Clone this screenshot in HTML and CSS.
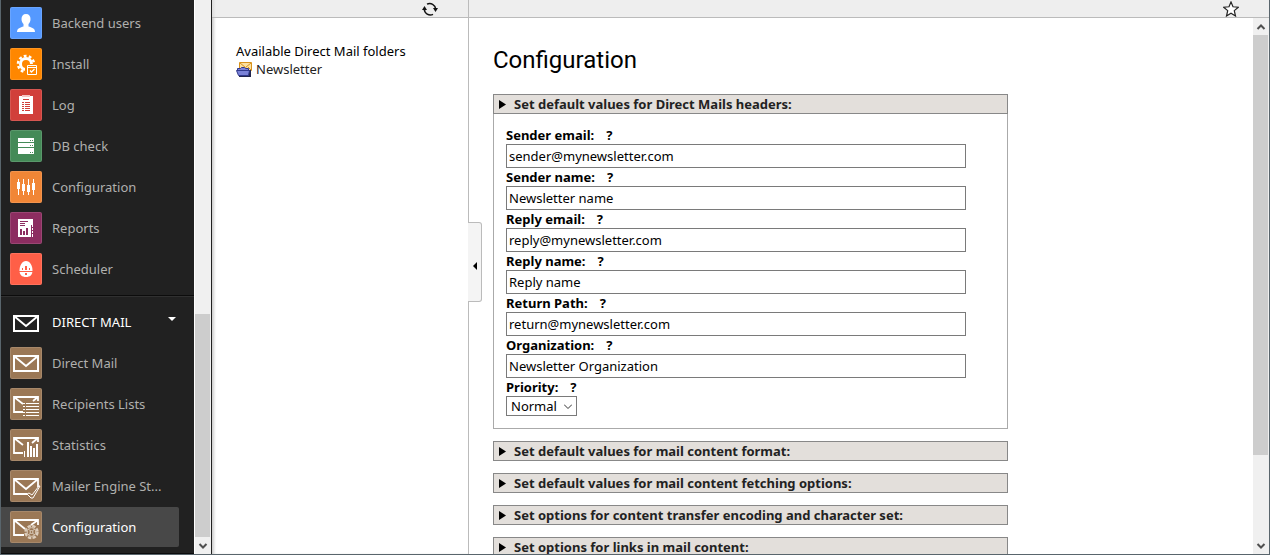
FILE: index.html
```html
<!DOCTYPE html>
<html lang="en">

<head>
    <meta charset="UTF-8">
    <meta name="viewport" content="width=device-width, initial-scale=1.0">
    <title>Direct Mail - Configuration</title>
    <link rel="stylesheet" href="styles.css">
</head>

<body>

    <div class="app">

        <!-- Module menu -->
        <nav class="menu">
            <ul class="menu-group">
                <li><a href="#" class="menu-item">
                    <svg class="icon blue" viewBox="0 0 32 32"><path fill="#fff" d="M16 7c3 0 4.500 2 4.500 5 0 2.500-1 4-2 5v2.500c3 1 6.500 1.500 6.500 5.500H7c0-4 3.500-4.500 6.500-5.500V17c-1-1-2-2.500-2-5 0-3 1.500-5 4.500-5z"/></svg>
                    <span>Backend users</span></a></li>
                <li><a href="#" class="menu-item">
                    <svg class="icon orange" viewBox="0 0 32 32"><circle cx="16" cy="16" r="5.500" fill="none" stroke="#fff" stroke-width="3"/><circle cx="16" cy="16" r="8" fill="none" stroke="#fff" stroke-width="2.500" stroke-dasharray="2.800 2.230"/><path fill="#ff8700" d="M15 16h13v12H15z"/><path fill="none" stroke="#fff" d="M17.500 17.500h9v9h-9zM17 19.500h10"/><path fill="none" stroke="#fff" stroke-width="1.300" d="M20 22.500l1.500 1.500 3-3"/></svg>
                    <span>Install</span></a></li>
                <li><a href="#" class="menu-item">
                    <svg class="icon red" viewBox="0 0 32 32"><path fill="#fff" d="M9 7h14v18H9z"/><path fill="#f5c6c4" d="M12 6h8v2h-8z"/><path stroke="#d13f3a" d="M13 10.500h6M12 13.500h2m1 0h5M12 15.500h2m1 0h5M12 17.500h2m1 0h5M12 19.500h2m1 0h5M12 21.500h2m1 0h5"/></svg>
                    <span>Log</span></a></li>
                <li><a href="#" class="menu-item">
                    <svg class="icon green" viewBox="0 0 32 32"><path fill="#fff" d="M8 8h16v4H8zM8 13h16v4H8zM8 18h16v6H8z"/><path stroke="#448a57" d="M20 10.500h1m1 0h1M20 15.500h1m1 0h1M20 22.500h1m1 0h1"/></svg>
                    <span>DB check</span></a></li>
                <li><a href="#" class="menu-item">
                    <svg class="icon amber" viewBox="0 0 32 32"><path stroke="#fff" d="M8.500 8v16M13.500 8v16M18.500 8v16M23.500 8v16"/><path fill="#fff" d="M7 11h3v7H7zM12 13h3v7h-3zM17 14h3v7h-3zM22 12h3v7h-3z"/></svg>
                    <span>Configuration</span></a></li>
                <li><a href="#" class="menu-item">
                    <svg class="icon purple" viewBox="0 0 32 32"><path fill="#fff" d="M8 7h15v18H8z"/><path stroke="#8c2d60" d="M10 9.500h8M10 11.500h5M10 13.500h5M21.500 13v12M22 15.500h1M22 18.500h1M22 21.500h1"/><path fill="#8c2d60" d="M10 17h2v6h-2zM13 19h2v4h-2zM16 16h2v7h-2z"/></svg>
                    <span>Reports</span></a></li>
                <li><a href="#" class="menu-item">
                    <svg class="icon coral" viewBox="0 0 32 32"><path fill="#fff" d="M16 8c4 0 6.500 5 6.500 9.500S20 24 16 24s-6.500-2-6.500-6.500S12 8 16 8z"/><path stroke="#ff5f47" d="M9 18.500h14M12.500 15v2M19.500 15v2"/><path stroke="#ff5f47" stroke-width="2" d="M16 13v4M16 20v2"/></svg>
                    <span>Scheduler</span></a></li>
            </ul>

            <ul class="menu-group">
                <li><a href="#" class="menu-item menu-head">
                    <svg class="icon" viewBox="0 0 32 32"><path fill="none" stroke="#fff" stroke-width="2" d="M4 10h24v15H4zM4 10l12 10 12-10"/></svg>
                    <span>DIRECT MAIL</span>
                    <svg class="caret" viewBox="0 0 8 4"><path fill="#fff" d="M0 0h8L4 4z"/></svg></a></li>
                <li><a href="#" class="menu-item">
                    <svg class="icon brown" viewBox="0 0 32 32"><path fill="none" stroke="#fff" stroke-width="2" d="M4 9h24v15H4zM4 9l12 10L28 9"/></svg>
                    <span>Direct Mail</span></a></li>
                <li><a href="#" class="menu-item">
                    <svg class="icon brown" viewBox="0 0 32 32"><path fill="none" stroke="#fff" stroke-width="1.800" d="M28 13V9H4v15h9M4 9l9 7M28 9l-5 4"/><path stroke="#fff" stroke-width="1.200" d="M13 15.500h2m1 0h13M13 18.500h2m1 0h13M13 21.500h2m1 0h13M13 24.500h2m1 0h13M13 27.500h2m1 0h13"/></svg>
                    <span>Recipients Lists</span></a></li>
                <li><a href="#" class="menu-item">
                    <svg class="icon brown" viewBox="0 0 32 32"><path fill="none" stroke="#fff" stroke-width="1.800" d="M28 13V9H4v15h9M4 9l9 7M28 9l-6 5"/><path fill="#fff" d="M14 22h1v6h-1zM17 13h2v15h-2zM20 17h2v11h-2zM23 19h2v9h-2zM26 15h2v13h-2z"/></svg>
                    <span>Statistics</span></a></li>
                <li><a href="#" class="menu-item">
                    <svg class="icon brown" viewBox="0 0 32 32"><path fill="none" stroke="#fff" stroke-width="1.800" d="M28 17V9H4v15h13M4 9l12 10L28 9"/><path fill="#9b7856" stroke="#fff" d="M17 24l2-1 3 2 7-9h1l-7 12h-2z"/></svg>
                    <span>Mailer Engine St...</span></a></li>
                <li><a href="#" class="menu-item active">
                    <svg class="icon brown" viewBox="0 0 32 32"><path fill="none" stroke="#fff" stroke-width="1.800" d="M28 14V9H4v15h10M4 9l11 9M28 9l-7 5"/><circle cx="21.500" cy="21" r="6" fill="#9b7856" stroke="#dccdbc" stroke-width="2.400" stroke-dasharray="3.400 1.310"/><circle cx="21.500" cy="21" r="4.300" fill="none" stroke="#dccdbc"/><circle cx="21.500" cy="21" r="1.500" fill="none" stroke="#dccdbc"/><path stroke="#dccdbc" d="M18.500 18l2 2M24.500 18l-2 2M18.500 24l2-2M24.500 24l-2-2"/></svg>
                    <span>Configuration</span></a></li>
            </ul>
            <div class="menu-group"></div>
        </nav>

        <div class="scrollbar menu-scroll">
            <div class="thumb"></div>
            <svg class="scroll-arrow" viewBox="0 0 16 16"><path fill="none" stroke="#505050" stroke-width="2" d="M4.500 6.500L8 10l3.500-3.500"/></svg>
        </div>

        <!-- Folder list -->
        <aside class="folders">
            <div class="topbar">
                <button type="button" class="icon-button" aria-label="Refresh">
                    <svg viewBox="0 0 16 16"><path fill="none" stroke="#111" stroke-width="1.500" d="M5 3.200A6 6 0 0 1 13.700 8M11 13.300A6 6 0 0 1 2.300 8"/><path fill="#111" d="M11 7h5l-2.500 4zM0 9h5L2.500 5z"/></svg>
                </button>
            </div>
            <div class="folders-body">
                <div>Available Direct Mail folders</div>
                <a href="#" class="folder">
                    <svg viewBox="0 0 16 16"><path fill="#fbe0a0" stroke="#d8921c" d="M3.500 1.500h12v8h-12z"/><path fill="none" stroke="#d8921c" d="M4 2l5.500 4.500L15 2M4 9l3-3M15 9l-3-3"/><path fill="#22264e" d="M12 9h3v7H3v-1h9z"/><path fill="#7a82d8" stroke="#30388c" d="M1.500 9.500v-2h3l1-1h3l1 1h3v2"/><path fill="#7a82d8" stroke="#30388c" d="M.5 9.500h13l-1 5h-10z"/></svg>
                    <span>Newsletter</span></a>
            </div>
        </aside>

        <!-- Module content -->
        <main class="content">
            <div class="topbar">
                <button type="button" class="icon-button" aria-label="Bookmark">
                    <svg viewBox="0 0 16 16"><path fill="#fff" stroke="#222" stroke-width="1.200" d="M8 1l2 4.800 5.300.4-4 3.400 1.200 5.400L8 12.300 3.500 15l1.200-5.400-4-3.400L6 5.800z"/></svg>
                </button>
            </div>
            <button type="button" class="collapse" aria-label="Collapse folder list">
                <svg viewBox="0 0 4 8"><path d="M4 0v8L0 4z"/></svg>
            </button>
            <div class="content-row">
                <div class="module">
                    <h1>Configuration</h1>

                    <section class="panel">
                        <button type="button" class="panel-title"><svg viewBox="0 0 7 9"><path d="M0 0l7 4.500L0 9z"/></svg>Set default values for Direct Mails headers:</button>
                        <form class="panel-body">
                            <div class="label-row"><label for="senderEmail">Sender email:</label><a href="#" class="help">?</a></div>
                            <input type="text" id="senderEmail" value="sender@mynewsletter.com">

                            <div class="label-row"><label for="senderName">Sender name:</label><a href="#" class="help">?</a></div>
                            <input type="text" id="senderName" value="Newsletter name">

                            <div class="label-row"><label for="replyEmail">Reply email:</label><a href="#" class="help">?</a></div>
                            <input type="text" id="replyEmail" value="reply@mynewsletter.com">

                            <div class="label-row"><label for="replyName">Reply name:</label><a href="#" class="help">?</a></div>
                            <input type="text" id="replyName" value="Reply name">

                            <div class="label-row"><label for="returnPath">Return Path:</label><a href="#" class="help">?</a></div>
                            <input type="text" id="returnPath" value="return@mynewsletter.com">

                            <div class="label-row"><label for="organization">Organization:</label><a href="#" class="help">?</a></div>
                            <input type="text" id="organization" value="Newsletter Organization">

                            <div class="label-row"><label for="priority">Priority:</label><a href="#" class="help">?</a></div>
                            <div class="select-wrap">
                                <select id="priority">
                                    <option>Low</option>
                                    <option selected>Normal</option>
                                    <option>High</option>
                                </select>
                                <svg viewBox="0 0 8 5"><path fill="none" stroke="#333" d="M0 .5l4 4 4-4"/></svg>
                            </div>
                        </form>
                    </section>

                    <section class="panel">
                        <button type="button" class="panel-title"><svg viewBox="0 0 7 9"><path d="M0 0l7 4.500L0 9z"/></svg>Set default values for mail content format:</button>
                    </section>
                    <section class="panel">
                        <button type="button" class="panel-title"><svg viewBox="0 0 7 9"><path d="M0 0l7 4.500L0 9z"/></svg>Set default values for mail content fetching options:</button>
                    </section>
                    <section class="panel">
                        <button type="button" class="panel-title"><svg viewBox="0 0 7 9"><path d="M0 0l7 4.500L0 9z"/></svg>Set options for content transfer encoding and character set:</button>
                    </section>
                    <section class="panel">
                        <button type="button" class="panel-title"><svg viewBox="0 0 7 9"><path d="M0 0l7 4.500L0 9z"/></svg>Set options for links in mail content:</button>
                    </section>
                </div>
                <div class="scrollbar content-scroll">
                    <svg class="scroll-arrow" viewBox="0 0 16 16"><path fill="none" stroke="#505050" stroke-width="2" d="M4.500 10.500L8 7l3.500 3.500"/></svg>
                    <div class="thumb"></div>
                    <svg class="scroll-arrow" viewBox="0 0 16 16"><path fill="none" stroke="#505050" stroke-width="2" d="M4.500 6.500L8 10l3.500-3.500"/></svg>
                </div>
            </div>
        </main>

    </div>
</body>

</html>
```
FILE: styles.css
```css
* {
    box-sizing: border-box;
}

body {
    margin: 0;
    font-family: "Noto Sans", "Open Sans", sans-serif;
    font-size: 13px;
    line-height: 18px;
    color: #000;
    background-color: #fff;
}

a {
    color: inherit;
    text-decoration: none;
}

ul {
    list-style: none;
    margin: 0;
    padding: 0;
}

svg {
    display: block;
    flex: none;
}

button,
input,
select {
    font: inherit;
    color: inherit;
}

.app {
    display: flex;
    height: 100vh;
    border: 1px solid #59656c;
    border-top: none;
    overflow: hidden;
}

/* Module menu */
.menu {
    flex: none;
    width: 193px;
    padding-right: 15px;
    background-color: #212121;
    color: #b0b0ae;
    overflow: hidden;
}

.menu-group {
    margin-right: -15px;
    padding: 5px 15px 5px 0;
    border-top: 1px solid #303030;
    border-bottom: 1px solid #0c0c0c;
}

.menu-group:first-child {
    padding-top: 3px;
    border-top: none;
}

.menu-item {
    display: flex;
    align-items: center;
    gap: 10px;
    height: 40px;
    margin-bottom: 1px;
    padding-left: 9px;
    border-radius: 0 2px 2px 0;
}

.menu-item:hover,
.menu-item.active {
    background-color: #484848;
    color: #fff;
}

.menu-head {
    color: #fff;
}

.icon {
    width: 32px;
    height: 32px;
    border-radius: 2px;
    box-shadow: inset 0 0 0 1px rgba(255, 255, 255, 0.12);
}

.menu-head .icon {
    box-shadow: none;
}

.blue { background-color: #5599ff; }
.orange { background-color: #ff8700; }
.red { background-color: #d13f3a; }
.green { background-color: #448a57; }
.amber { background-color: #f18636; }
.purple { background-color: #8c2d60; }
.coral { background-color: #ff5f47; }
.brown { background-color: #9b7856; }

.caret {
    width: 8px;
    height: 4px;
    margin: 0 3px 6px auto;
}

/* Scrollbars */
.scrollbar {
    flex: none;
    display: flex;
    flex-direction: column;
    background-color: #f0f0f0;
}

.scroll-arrow {
    width: 16px;
    height: 17px;
}

.thumb {
    background-color: #cdcdcd;
}

.menu-scroll {
    width: 18px;
    border-left: 1px solid #fff;
    border-right: 1px solid #212121;
    justify-content: flex-end;
}

.menu-scroll .thumb {
    width: 15px;
    height: 223px;
}

.content-scroll {
    width: 16px;
}

.content-scroll .thumb {
    width: 15px;
    height: 420px;
    margin-bottom: auto;
}

/* Folder list */
.topbar {
    display: flex;
    justify-content: flex-end;
    height: 18px;
    padding-right: 30px;
    background-color: #eee;
    border-bottom: 1px solid #bbb;
}

.icon-button {
    width: 16px;
    height: 17px;
    padding: 1px 0 0;
    border: none;
    background: none;
}

.folders {
    flex: none;
    width: 257px;
    border-right: 1px solid #bbb;
    box-shadow: inset 3px 0 3px -1px rgba(0, 0, 0, 0.2);
}

.folders .topbar {
    background-color: transparent;
    background-image: linear-gradient(to right, #ddd, #eee 4px);
}

.folders-body {
    padding: 24px;
}

.folder {
    display: flex;
    align-items: center;
    gap: 4px;
    color: #222;
}

.folder svg {
    width: 16px;
    height: 16px;
}

/* Content */
.content {
    flex: 1;
    display: flex;
    flex-direction: column;
    min-width: 0;
    position: relative;
}

.content .topbar {
    flex: none;
}

.content-row {
    flex: 1;
    display: flex;
    min-height: 0;
}

.module {
    flex: 1;
    padding: 24px;
    overflow: hidden;
}

.collapse {
    position: absolute;
    left: -1px;
    top: 40%;
    display: flex;
    align-items: center;
    justify-content: center;
    width: 14px;
    height: 80px;
    padding: 8px 0 0;
    background-color: #f4f4f4;
    border: 1px solid #bbb;
    border-left: none;
    border-radius: 0 3px 3px 0;
}

.collapse svg {
    width: 4px;
    height: 8px;
}

h1 {
    margin: 0 0 16px;
    font-family: Roboto, "Open Sans", sans-serif;
    font-size: 24px;
    font-weight: 400;
    line-height: 36px;
}

.panel {
    max-width: 515px;
    margin-bottom: 12px;
}

.panel-title {
    display: flex;
    align-items: center;
    width: 100%;
    height: 20px;
    padding: 0 5px;
    gap: 8px;
    background-color: #e3dfdb;
    border: 1px solid #888;
    color: #222;
    font-weight: 700;
    text-align: left;
}

.panel-title svg {
    width: 7px;
    height: 9px;
}

.panel-body {
    padding: 12px;
    border: 1px solid #aaa;
    border-top: none;
}

.label-row {
    display: flex;
    gap: 12px;
    font-weight: 700;
}

input {
    display: block;
    width: 100%;
    max-width: 460px;
    height: 24px;
    padding: 0 2px;
    border: 1px solid #7a7a7a;
    background-color: #fff;
}

.select-wrap {
    position: relative;
    width: 71px;
}

select {
    display: block;
    appearance: none;
    width: 100%;
    height: 20px;
    padding: 0 4px;
    border: 1px solid #7a7a7a;
    border-radius: 0;
    background-color: #fff;
}

.select-wrap svg {
    position: absolute;
    right: 5px;
    top: 8px;
    width: 8px;
    height: 5px;
    pointer-events: none;
}
```
